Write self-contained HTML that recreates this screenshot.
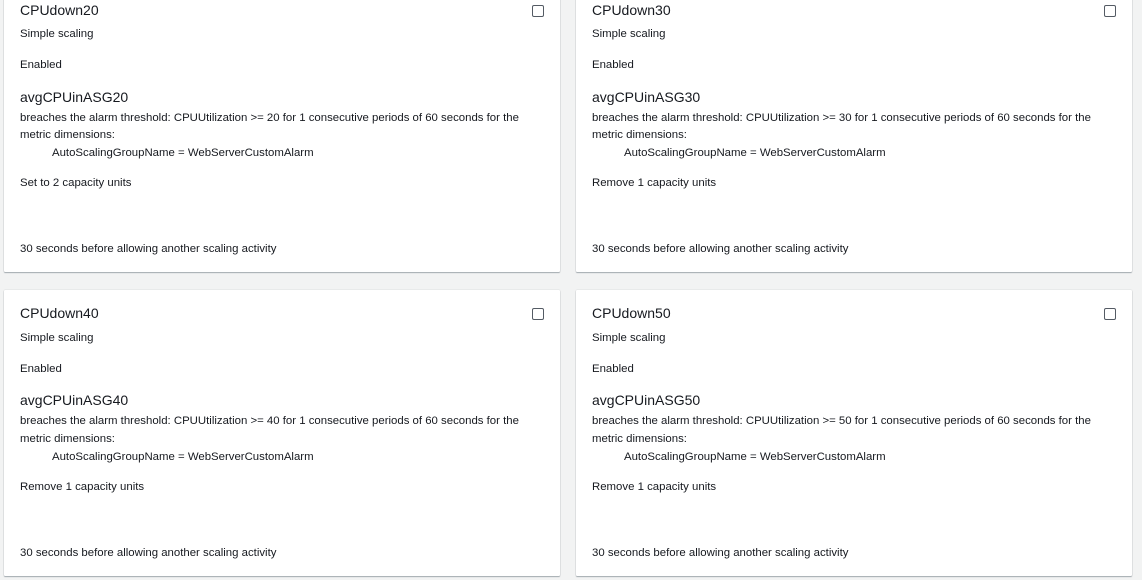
<!DOCTYPE html><html><head><style>
body{margin:0;width:1142px;height:580px;background:#f2f3f3;position:relative;overflow:hidden;font-family:"Liberation Sans",Arial,sans-serif;color:#16191f}
.c{position:absolute;width:556px;background:#fff;box-shadow:0 1px 1px rgba(0,22,40,.3),0 0 1px rgba(0,22,40,.25);border-radius:1px}
.t{position:absolute;left:16px;white-space:nowrap;font-size:11.4px;line-height:14px;margin-top:1px}
.h{font-size:14px;line-height:18px;margin-top:0}
.cb{position:absolute;left:528px;width:10px;height:10px;border:1px solid #545b64;border-radius:2px}
</style></head><body>
<div class="c" style="left:4px;top:-13px;height:285px">
<div class="cb" style="top:18px"></div>
<div class="t h" style="top:14px">CPUdown20</div>
<div class="t" style="top:39px">Simple scaling</div>
<div class="t" style="top:70px">Enabled</div>
<div class="t h" style="top:101px">avgCPUinASG20</div>
<div class="t" style="top:123px">breaches the alarm threshold: CPUUtilization &gt;= 20 for 1 consecutive periods of 60 seconds for the</div>
<div class="t" style="top:140px">metric dimensions:</div>
<div class="t" style="top:158px;left:48px">AutoScalingGroupName = WebServerCustomAlarm</div>
<div class="t" style="top:188px">Set to 2 capacity units</div>
<div class="t" style="top:254px">30 seconds before allowing another scaling activity</div>
</div>
<div class="c" style="left:576px;top:-13px;height:285px">
<div class="cb" style="top:18px"></div>
<div class="t h" style="top:14px">CPUdown30</div>
<div class="t" style="top:39px">Simple scaling</div>
<div class="t" style="top:70px">Enabled</div>
<div class="t h" style="top:101px">avgCPUinASG30</div>
<div class="t" style="top:123px">breaches the alarm threshold: CPUUtilization &gt;= 30 for 1 consecutive periods of 60 seconds for the</div>
<div class="t" style="top:140px">metric dimensions:</div>
<div class="t" style="top:158px;left:48px">AutoScalingGroupName = WebServerCustomAlarm</div>
<div class="t" style="top:188px">Remove 1 capacity units</div>
<div class="t" style="top:254px">30 seconds before allowing another scaling activity</div>
</div>
<div class="c" style="left:4px;top:290px;height:286px">
<div class="cb" style="top:18px"></div>
<div class="t h" style="top:14px">CPUdown40</div>
<div class="t" style="top:40px">Simple scaling</div>
<div class="t" style="top:71px">Enabled</div>
<div class="t h" style="top:101px">avgCPUinASG40</div>
<div class="t" style="top:123px">breaches the alarm threshold: CPUUtilization &gt;= 40 for 1 consecutive periods of 60 seconds for the</div>
<div class="t" style="top:141px">metric dimensions:</div>
<div class="t" style="top:159px;left:48px">AutoScalingGroupName = WebServerCustomAlarm</div>
<div class="t" style="top:189px">Remove 1 capacity units</div>
<div class="t" style="top:255px">30 seconds before allowing another scaling activity</div>
</div>
<div class="c" style="left:576px;top:290px;height:286px">
<div class="cb" style="top:18px"></div>
<div class="t h" style="top:14px">CPUdown50</div>
<div class="t" style="top:40px">Simple scaling</div>
<div class="t" style="top:71px">Enabled</div>
<div class="t h" style="top:101px">avgCPUinASG50</div>
<div class="t" style="top:123px">breaches the alarm threshold: CPUUtilization &gt;= 50 for 1 consecutive periods of 60 seconds for the</div>
<div class="t" style="top:141px">metric dimensions:</div>
<div class="t" style="top:159px;left:48px">AutoScalingGroupName = WebServerCustomAlarm</div>
<div class="t" style="top:189px">Remove 1 capacity units</div>
<div class="t" style="top:255px">30 seconds before allowing another scaling activity</div>
</div>
</body></html>
